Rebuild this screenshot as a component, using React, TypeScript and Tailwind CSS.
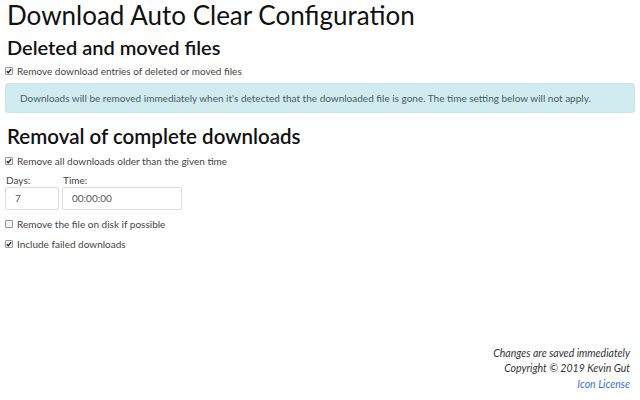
import React from "react";

function Check({ checked }: { checked: boolean }) {
  return (
    <span className="w-[8px] h-[8px] border border-[#999] bg-[#f4f4f4] rounded-[1px] flex items-center justify-center shrink-0">
      {checked && (
        <svg width="6" height="6" viewBox="0 0 6 6">
          <path d="M0.8 3.2 L2.3 4.7 L5.2 1.2" fill="none" stroke="#222" strokeWidth="1.3" />
        </svg>
      )}
    </span>
  );
}

export default function App() {
  return (
    <div className="w-[640px] h-[400px] bg-white text-[#212529] flex flex-col px-[5px] overflow-hidden" style={{ fontFamily: 'Lato, "Open Sans", sans-serif' }}>
      <h1 className="text-[26px] leading-[31px] ml-[2px] text-[#111]">Download Auto Clear Configuration</h1>
      <h2 className="text-[20px] leading-[24px] mt-[4px] ml-[2px] font-semibold text-[#111]">Deleted and moved files</h2>
      <label className="flex items-center gap-[4px] mt-[5px] text-[10px] leading-[14px] text-[#444]">
        <Check checked />
        Remove download entries of deleted or moved files
      </label>
      <div className="mt-[5px] h-[30px] bg-[#d1ecf1] border border-[#c6e6ec] rounded-[3px] flex items-center px-[14px] text-[10px] text-[#4a5a60] whitespace-nowrap">
        Downloads will be removed immediately when it's detected that the downloaded file is gone. The time setting below will not apply.
      </div>
      <h2 className="text-[20.5px] leading-[24px] mt-[11px] ml-[2px] font-semibold text-[#111]">Removal of complete downloads</h2>
      <label className="flex items-center gap-[4px] mt-[6px] text-[10px] leading-[14px] text-[#444]">
        <Check checked />
        Remove all downloads older than the given time
      </label>
      <div className="flex gap-[3px] mt-[6px]">
        <div className="flex flex-col">
          <span className="text-[10px] leading-[12px] text-[#444] ml-[1px]">Days:</span>
          <div className="mt-[1px] w-[54px] h-[23px] border border-[#ddd] rounded-[2px] flex items-center px-[9px] text-[10px] text-[#555]">7</div>
        </div>
        <div className="flex flex-col">
          <span className="text-[10px] leading-[12px] text-[#444] ml-[1px]">Time:</span>
          <div className="mt-[1px] w-[120px] h-[23px] border border-[#ddd] rounded-[2px] flex items-center px-[9px] text-[10px] text-[#555]">00:00:00</div>
        </div>
      </div>
      <label className="flex items-center gap-[4px] mt-[7px] text-[10px] leading-[14px] text-[#444]">
        <Check checked={false} />
        Remove the file on disk if possible
      </label>
      <label className="flex items-center gap-[4px] mt-[6px] text-[10px] leading-[14px] text-[#444]">
        <Check checked />
        Include failed downloads
      </label>
      <div className="flex-1" />
      <div className="flex flex-col items-end pr-[5px] mb-[8px] text-[10.5px] leading-[15.5px] italic text-[#333]">
        <span>Changes are saved immediately</span>
        <span>Copyright © 2019 Kevin Gut</span>
        <span className="text-[#3b6fd6]">Icon License</span>
      </div>
    </div>
  );
}
